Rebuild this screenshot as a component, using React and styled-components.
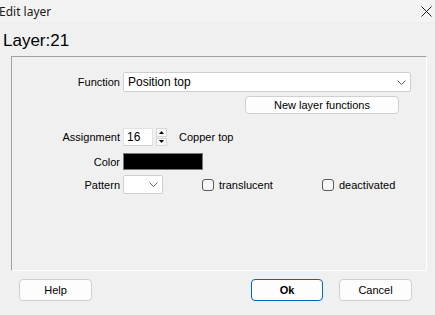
import styled, { createGlobalStyle } from 'styled-components';

const GlobalStyle = createGlobalStyle`
    html, body {
        margin: 0;
        padding: 0;
        background: #f0f0f0;
        overflow: hidden;
    }
    * {
        box-sizing: border-box;
    }
`;

const Window = styled.div`
    width: 435px;
    height: 315px;
    display: flex;
    flex-direction: column;
    background: #f0f0f0;
    font-family: "Liberation Sans", Arial, sans-serif;
    font-size: 11px;
    color: #000;
`;

const TitleBar = styled.div`
    height: 22px;
    display: flex;
    align-items: center;
    justify-content: space-between;
    background: #f3f3f3;
    padding: 0 3px 0 0;
    span {
        margin-left: -1px;
        font-family: "Noto Sans", "Open Sans", sans-serif;
        font-size: 12px;
        color: #1a1a1a;
    }
`;

const Heading = styled.div`
    padding: 9px 0 0 3px;
    height: 34px;
    font-size: 17px;
    line-height: 20px;
`;

const GroupBox = styled.div`
    margin-left: 11px;
    width: 416px;
    height: 215px;
    border-top: 1px solid #a0a0a0;
    border-left: 1px solid #a0a0a0;
    border-right: 1px solid #ffffff;
    border-bottom: 1px solid #ffffff;
    padding-top: 15px;
    display: flex;
    flex-direction: column;
`;

const Row = styled.div`
    display: flex;
    align-items: center;
    margin-top: ${p => p.$top || 0}px;
    height: ${p => p.$h || 20}px;
`;

const Label = styled.label`
    width: 108px;
    margin-right: 3px;
    text-align: right;
    white-space: nowrap;
`;

const Select = styled.div`
    width: ${p => p.$w}px;
    height: ${p => p.$h || 20}px;
    background: #ffffff;
    border: 1px solid #cfcfcf;
    border-radius: 2px;
    display: flex;
    align-items: center;
    justify-content: space-between;
    padding: 0 4px 0 4px;
    font-size: 12px;
    svg {
        flex: none;
    }
`;

const Button = styled.button`
    width: ${p => p.$w}px;
    height: ${p => p.$h || 22}px;
    margin-left: ${p => p.$left || 0}px;
    background: #fdfdfd;
    border: 1px solid ${p => (p.$primary ? '#0067c0' : '#d0d0d0')};
    border-radius: 4px;
    font-family: "Liberation Sans", Arial, sans-serif;
    font-size: 11px;
    font-weight: ${p => (p.$primary ? 700 : 400)};
    color: #000;
    padding: 0;
`;

const NumberInput = styled.div`
    width: 30px;
    height: 18px;
    background: #ffffff;
    border: 1px solid #e2e2e2;
    border-bottom-color: #cfcfcf;
    padding-left: 3px;
    display: flex;
    align-items: center;
    font-size: 12px;
`;

const Spinner = styled.div`
    margin-left: 3px;
    width: 11px;
    height: 18px;
    display: flex;
    flex-direction: column;
    gap: 1px;
`;

const SpinHalf = styled.div`
    flex: 1;
    background: #fbfbfb;
    border: 1px solid #d6d6d6;
    display: flex;
    align-items: center;
    justify-content: center;
`;

const Text = styled.span`
    margin-left: ${p => p.$left || 0}px;
    white-space: nowrap;
`;

const ColorSwatch = styled.div`
    width: 80px;
    height: 17px;
    background: #000;
    border: 1px solid #7a7a7a;
`;

const CheckItem = styled.label`
    display: flex;
    align-items: center;
    width: ${p => p.$w}px;
    margin-left: ${p => p.$left || 0}px;
    white-space: nowrap;
`;

const Check = styled.span`
    flex: none;
    width: 12px;
    height: 12px;
    margin-right: 5px;
    border: 1px solid #5b5b5b;
    border-radius: 3px;
    background: #f7f7f7;
`;

const Footer = styled.div`
    display: flex;
    align-items: center;
    margin-top: 8px;
    padding-left: 19px;
`;

const Chevron = ({ w = 9 }) => (
    <svg width={w} height="5" viewBox="0 0 9 5">
        <path d="M0.5 0.5 L4.5 4.5 L8.5 0.5" fill="none" stroke="#606060" strokeWidth="1" />
    </svg>
);

const Arrow = ({ up }) => (
    <svg width="5" height="3" viewBox="0 0 5 3">
        <path d={up ? 'M0 3 L2.5 0 L5 3 Z' : 'M0 0 L2.5 3 L5 0 Z'} fill="#000" />
    </svg>
);

function App() {
    return (
        <Window>
            <GlobalStyle />
            <TitleBar>
                <span>Edit layer</span>
                <svg width="11" height="11" viewBox="0 0 11 11">
                    <path d="M0.5 0.5 L10.5 10.5 M10.5 0.5 L0.5 10.5" stroke="#1a1a1a" strokeWidth="1" />
                </svg>
            </TitleBar>
            <Heading>Layer:21</Heading>
            <GroupBox>
                <Row $h={20}>
                    <Label>Function</Label>
                    <Select $w={288}>
                        <span>Position top</span>
                        <Chevron />
                    </Select>
                </Row>
                <Row $top={4} $h={18}>
                    <Button $w={154} $h={18} $left={233}>New layer functions</Button>
                </Row>
                <Row $top={14} $h={18}>
                    <Label>Assignment</Label>
                    <NumberInput>16</NumberInput>
                    <Spinner>
                        <SpinHalf><Arrow up /></SpinHalf>
                        <SpinHalf><Arrow /></SpinHalf>
                    </Spinner>
                    <Text $left={12}>Copper top</Text>
                </Row>
                <Row $top={7} $h={17}>
                    <Label>Color</Label>
                    <ColorSwatch />
                </Row>
                <Row $top={5} $h={19}>
                    <Label>Pattern</Label>
                    <Select $w={40} $h={19}>
                        <span />
                        <Chevron />
                    </Select>
                    <CheckItem $left={39} $w={120}>
                        <Check />
                        translucent
                    </CheckItem>
                    <CheckItem $w={90}>
                        <Check />
                        deactivated
                    </CheckItem>
                </Row>
            </GroupBox>
            <Footer>
                <Button $w={73}>Help</Button>
                <Button $w={72} $left={159} $primary>Ok</Button>
                <Button $w={73} $left={16}>Cancel</Button>
            </Footer>
        </Window>
    );
}

export default App;
